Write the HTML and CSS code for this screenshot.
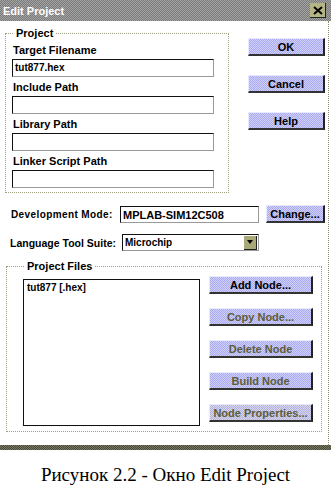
FILE: index.html
```html
<!DOCTYPE html>
<html lang="ru">
<head>
  <meta charset="UTF-8">
  <title>Edit Project</title>
  <link rel="stylesheet" href="styles.css">
</head>
<body>

  <div class="titlebar">
    <span class="title">Edit Project</span>
    <span class="close">
      <svg width="10" height="9" viewBox="0 0 10 9"><path d="M1 1 L9 8 M9 1 L1 8" stroke="#000" stroke-width="2"/></svg>
    </span>
  </div>

  <div class="content">
    <div class="top-row">
      <fieldset class="group project">
        <legend>Project</legend>
        <div class="label">Target Filename</div>
        <div class="field">tut877.hex</div>
        <div class="label">Include Path</div>
        <div class="field"></div>
        <div class="label">Library Path</div>
        <div class="field"></div>
        <div class="label">Linker Script Path</div>
        <div class="field"></div>
      </fieldset>

      <div class="main-buttons">
        <div class="btn">OK</div>
        <div class="btn">Cancel</div>
        <div class="btn">Help</div>
      </div>
    </div>

    <div class="row dev-row">
      <span class="row-label">Development Mode:</span>
      <div class="field mode">MPLAB-SIM12C508</div>
      <div class="btn change">Change...</div>
    </div>

    <div class="row lang-row">
      <span class="row-label">Language Tool Suite:</span>
      <div class="field combo">
        <span>Microchip</span>
        <span class="drop"><span class="arrow"></span></span>
      </div>
    </div>

    <fieldset class="group files">
      <legend>Project Files</legend>
      <div class="files-row">
        <div class="listbox">tut877 [.hex]</div>
        <div class="node-buttons">
          <div class="btn">Add Node...</div>
          <div class="btn disabled">Copy Node...</div>
          <div class="btn disabled">Delete Node</div>
          <div class="btn disabled">Build Node</div>
          <div class="btn disabled props">Node Properties...</div>
        </div>
      </div>
    </fieldset>
  </div>

  <div class="band"></div>

  <p class="caption">Рисунок 2.2 - Окно Edit Project</p>

</body>
</html>
```

FILE: styles.css
```css
body {
  margin: 0;
  width: 331px;
  background-color: #fff;
  font-family: 'Liberation Sans', Arial, sans-serif;
  font-size: 11px;
  font-weight: bold;
  color: #000;
}

.titlebar {
  height: 21px;
  display: flex;
  align-items: center;
  justify-content: space-between;
  padding: 0 5px 0 3px;
  background-color: #8c8c8c;
  background-image: repeating-conic-gradient(#7a7a7a 0 25%, #a4a4a4 0 50%);
  background-size: 2px 2px;
}

.title {
  color: #fff;
  font-size: 11px;
}

.close {
  width: 15px;
  height: 14px;
  display: flex;
  align-items: center;
  justify-content: center;
  background-color: #b4b484;
  border-right: 1px solid #222;
  border-bottom: 1px solid #222;
}

.content {
  width: 328px;
  height: 419px;
  border-right: 1px dotted #8a8a70;
  padding-top: 5px;
}

.top-row {
  display: flex;
}

.group {
  margin: 0;
  border: 1px dotted #a0a080;
}

.group legend {
  padding: 0 2px;
  margin-left: 2px;
  line-height: 14px;
  font-size: 11px;
}

.project {
  margin-left: 5px;
  width: 224px;
  box-sizing: border-box;
  padding: 3px 0 4px 6px;
}

.label {
  height: 14px;
  line-height: 14px;
  padding-left: 1px;
  margin-bottom: 2px;
}

.field {
  box-sizing: border-box;
  width: 202px;
  height: 18px;
  margin-bottom: 3px;
  border: 1px solid #111;
  border-right-color: #999;
  border-bottom-color: #999;
  padding-left: 2px;
  line-height: 16px;
  font-size: 10px;
  background-color: #fff;
}

.project .field:last-child {
  margin-bottom: 0;
}

.main-buttons {
  margin-left: 19px;
  padding-top: 12px;
  display: flex;
  flex-direction: column;
  gap: 19px;
}

.btn {
  box-sizing: border-box;
  width: 77px;
  height: 18px;
  display: flex;
  align-items: center;
  justify-content: center;
  background-color: #b8b8f4;
  background-image: repeating-conic-gradient(#aaaaf0 0 25%, #d0d0f8 0 50%);
  background-size: 2px 2px;
  border-top: 1px solid #e8e8ff;
  border-left: 1px solid #e8e8ff;
  border-right: 2px solid #222;
  border-bottom: 2px solid #333;
  font-size: 11px;
}

.btn.disabled {
  color: #5c5c3a;
}

.row {
  display: flex;
  align-items: center;
}

.dev-row {
  margin-top: 12px;
  padding-left: 11px;
}

.dev-row .row-label {
  width: 109px;
  letter-spacing: 0.4px;
  font-size: 10px;
}

.field.mode {
  width: 139px;
  height: 17px;
  margin: 0;
  font-size: 11px;
}

.btn.change {
  width: 59px;
  margin-left: 7px;
}

.lang-row {
  margin-top: 11px;
  padding-left: 10px;
}

.lang-row .row-label {
  width: 112px;
  font-size: 10.5px;
}

.field.combo {
  width: 137px;
  height: 17px;
  margin: 0;
  display: flex;
  align-items: center;
  justify-content: space-between;
  padding-right: 1px;
  font-size: 10px;
}

.drop {
  width: 12px;
  height: 13px;
  display: flex;
  align-items: center;
  justify-content: center;
  background-color: #a8a878;
  border-right: 1px solid #222;
  border-bottom: 1px solid #222;
}

.arrow {
  width: 0;
  height: 0;
  border-left: 3px solid transparent;
  border-right: 3px solid transparent;
  border-top: 4px solid #000;
}

.files {
  margin-left: 6px;
  margin-top: 8px;
  width: 316px;
  box-sizing: border-box;
  padding: 6px 0 5px 16px;
}

.files-row {
  display: flex;
  align-items: flex-start;
}

.listbox {
  box-sizing: border-box;
  width: 177px;
  height: 147px;
  border: 1px solid #111;
  padding: 1px 3px;
  font-size: 10px;
  line-height: 13px;
}

.node-buttons {
  margin-left: 9px;
  margin-top: -3px;
  display: flex;
  flex-direction: column;
  gap: 14px;
}

.node-buttons .btn {
  width: 104px;
}

.btn.props {
  background-image: repeating-conic-gradient(#b0b0e4 0 25%, #d8d8e8 0 50%);
}

.band {
  width: 331px;
  height: 5px;
  background-color: #5a5a48;
  background-image: repeating-conic-gradient(#48483a 0 25%, #7a7a62 0 50%);
  background-size: 2px 2px;
}

.caption {
  margin: 14px 0 0;
  text-align: center;
  font-family: 'Liberation Serif', 'Times New Roman', serif;
  font-weight: normal;
  font-size: 19px;
  line-height: 22px;
}
```
